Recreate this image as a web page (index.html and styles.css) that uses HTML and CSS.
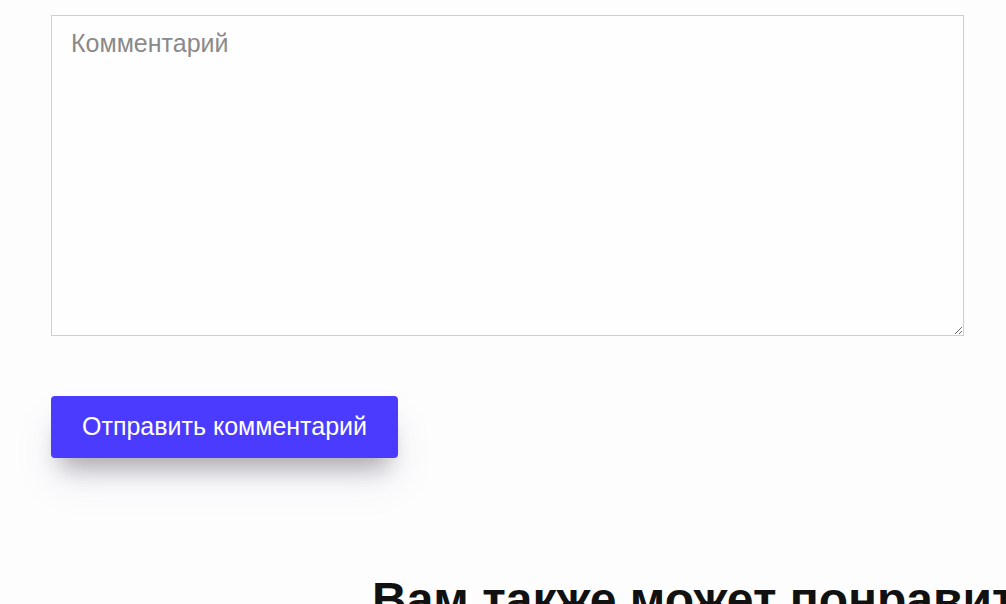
FILE: index.html
```html
<!DOCTYPE html>
<html lang="ru">
<head>
    <meta charset="UTF-8">
    <meta name="viewport" content="width=device-width, initial-scale=1.0">
    <title>Комментарии</title>
    <link rel="stylesheet" href="styles.css">
</head>
<body>
    <div class="container">
        <form class="comment-form" onsubmit="return false;">
            <textarea class="comment-input" placeholder="Комментарий"></textarea>
            <button type="submit" class="submit-button">Отправить комментарий</button>
        </form>

        <section class="related">
            <h2>Вам также может понравиться</h2>
        </section>
    </div>
</body>
</html>
```

FILE: styles.css
```css
body {
    font-family: "Liberation Sans", Arial, sans-serif;
    margin: 0;
    padding: 0;
    background-color: #fdfdfd;
    overflow: hidden;
}
.container {
    padding: 15px 0 0 51px;
    width: 913px;
}
.comment-form {
    display: flex;
    flex-direction: column;
    align-items: flex-start;
}
.comment-input {
    box-sizing: border-box;
    width: 913px;
    height: 321px;
    padding: 13px 19px;
    border: 1px solid #cfcfcf;
    background-color: #fefefe;
    font-family: "Liberation Sans", Arial, sans-serif;
    font-size: 25px;
    color: #333;
    margin: 0;
}
.comment-input::placeholder {
    color: #8a8a8a;
}
.submit-button {
    margin-top: 60px;
    padding: 16px 31px 17px;
    background-color: #4b3bff;
    border: none;
    border-radius: 4px;
    color: white;
    font-family: "Liberation Sans", Arial, sans-serif;
    font-size: 25px;
    cursor: pointer;
    box-shadow: 0 20px 24px -10px rgba(0, 0, 0, 0.3),
                0 24px 44px rgba(70, 70, 170, 0.07);
}
.submit-button:hover {
    background-color: #3a2af0;
}
.related {
    margin-top: 114px;
    padding-left: 321px;
    white-space: nowrap;
}
.related h2 {
    margin: 0;
    font-size: 48px;
    color: #111;
}
```
